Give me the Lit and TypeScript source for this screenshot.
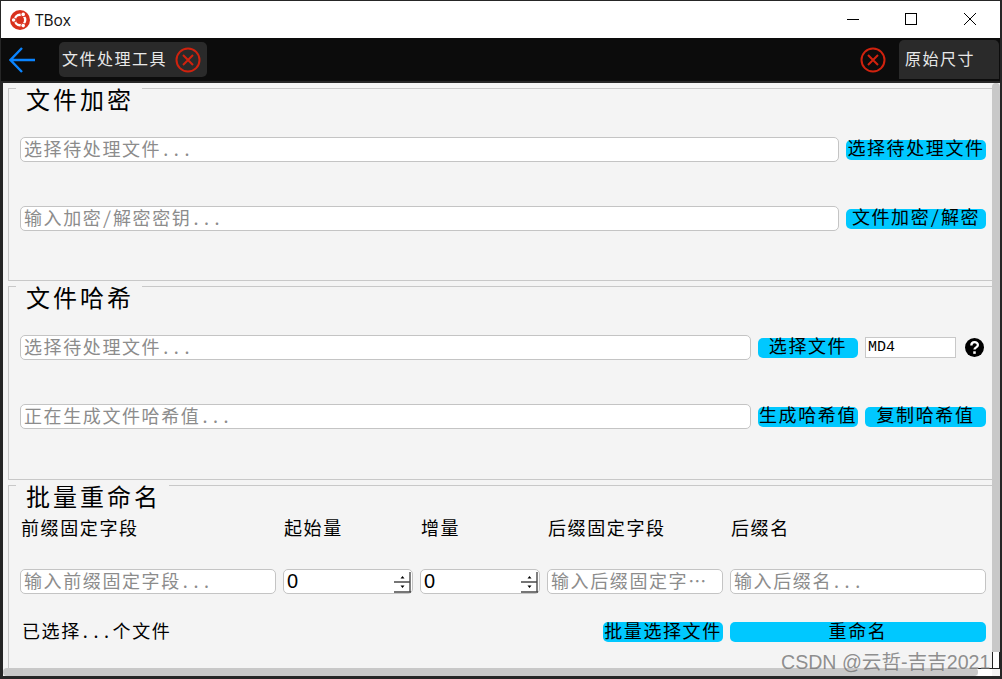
import { LitElement, html, css } from "lit";
import { customElement } from "lit/decorators.js";

const closeIcon = html`<svg class="x" width="26" height="26" viewBox="0 0 26 26" fill="none" stroke="#d0220e" stroke-width="2"><circle cx="13" cy="13" r="11.5"/><path d="M8 8l10 10M18 8L8 18"/></svg>`;

@customElement("app-root")
export class AppRoot extends LitElement {
  static styles = css`
    :host { display: block; width: 1002px; height: 679px; overflow: hidden; font-family: "Noto Sans CJK SC", "Liberation Serif", serif; font-feature-settings: "hwid"; color: #000; }
    * { box-sizing: border-box; }
    .win { width: 1002px; height: 679px; display: flex; flex-direction: column; background: #262626; padding: 1px 2px 3px 1px; position: relative; }
    .title { height: 37px; background: #fff; display: flex; align-items: center; flex: none; padding-left: 9px; }
    .title .name { font: 15.500px "Open Sans", sans-serif; margin-left: 5px; color: #111; }
    .ctl { margin-left: auto; display: flex; }
    .ctl svg { display: block; width: 59px; height: 37px; }
    .bar { height: 43px; background: #0c0c0c; display: flex; align-items: center; flex: none; color: #e8e8e8; }
    .back { margin-left: 8px; }
    .tab { margin-left: 24px; width: 148px; height: 35px; border-radius: 5px; background: #2a2a2a; display: flex; align-items: center; padding-left: 3px; font-size: 16px; letter-spacing: 1.500px; }
    .tab span { padding-bottom: 4px; }
    .tab svg { margin-left: 8px; }
    .bar .x2 { margin-left: auto; margin-right: 13px; display: block; }
    .orig { width: 100px; height: 39px; border-radius: 5px 5px 0 0; background: #2a2a2a; font-size: 16px; letter-spacing: 1.500px; display: flex; align-items: center; padding: 0 0 4px 6px; margin-right: 1px; }
    .mid { flex: 1; display: flex; min-height: 0; background: #f4f4f4; margin: 2px 0 0 2px; }
    .col { flex: 1; display: flex; flex-direction: column; min-width: 0; }
    .scroll { flex: 1; padding: 5px 0 0 5px; display: flex; flex-direction: column; gap: 5px; min-height: 0; overflow: hidden; }
    .side { width: 8px; flex: none; display: flex; flex-direction: column; }
    .vbar { flex: 1; background: #c8c8c8; border-radius: 4px 4px 0 0; }
    .vtrack { height: 16px; flex: none; background: #fff; border-left: 1px solid #222; border-right: 1px solid #222; }
    .corner { height: 8px; flex: none; background: #f4f4f4; border-top: 1px solid #222; }
    .hrow { height: 8px; flex: none; display: flex; }
    .hbar { flex: 1; background: #c8c8c8; border-radius: 4px; }
    .htrack { width: 14px; flex: none; background: #fff; border-top: 1px solid #222; }
    .group { border: 1px solid #c8c8c8; border-top: none; border-right: none; padding: 0 6px 0 11px; display: flex; flex-direction: column; height: 193px; flex: none; }
    .group.two { height: 194px; }
    .group.last { flex: 1; height: auto; border-bottom: none; }
    .head { display: flex; height: 26px; margin: 0 -6px 0 -11px; flex: none; }
    .head i { height: 1px; background: #c8c8c8; flex: none; width: 7px; }
    .head i.rest { flex: 1; }
    .head b { font-weight: 400; font-size: 24px; line-height: 28px; letter-spacing: 3px; padding: 0 8px 0 10px; height: 28px; margin-top: -3px; }
    .row { display: flex; align-items: center; gap: 7px; height: 25px; flex: none; }
    .row.first { margin-top: 23px; }
    .row.second { margin-top: 44px; }
    input { font: inherit; font-feature-settings: "hwid"; font-size: 18px; letter-spacing: 1.600px; height: 25px; border: 1px solid #c4c4c4; border-radius: 5px; background: #fff; padding: 0 3px 3px; min-width: 0; outline: none; text-overflow: ellipsis; color: #000; }
    input::placeholder { color: #8c8c8c; opacity: 1; }
    .grow { flex: 1; }
    button { font: inherit; font-feature-settings: "hwid"; font-size: 18px; letter-spacing: 1.600px; height: 20px; line-height: 14px; padding: 0 0 5px; border: none; border-radius: 5px; background: #00c8ff; color: #000; white-space: nowrap; flex: none; text-align: center; }
    .w140 { width: 140px; }
    .w100 { width: 100px; }
    .w121 { width: 121px; }
    .combo { width: 91px; height: 21px; border: 1px solid #c8c8c8; background: #fff; font: 15px "Liberation Mono", monospace; color: #000; padding-left: 2px; line-height: 19px; flex: none; }
    .help { width: 19px; height: 19px; margin-left: 2px; margin-right: 2px; flex: none; display: block; }
    .grid { display: grid; grid-template-columns: 256px 130px 120px 176px 256px; column-gap: 7px; }
    .labels { margin-top: 6px; font-size: 18px; letter-spacing: 1.600px; height: 24px; line-height: 20px; }
    .labels span { padding-left: 1px; white-space: nowrap; }
    .fields { margin-top: 28px; }
    .fields input { width: 100%; }
    .spin { display: flex; height: 25px; border: 1px solid #c4c4c4; border-radius: 5px; background: #fff; align-items: center; padding-right: 1px; font: 20px "Liberation Sans", sans-serif; }
    .spin span { flex: 1; padding: 0 0 1px 3px; }
    .arrows { width: 17px; height: 22px; display: block; flex: none; }
    .foot { margin-top: 27px; align-items: center; height: 22px; }
    .foot .count { font-size: 18px; letter-spacing: 1.600px; padding-left: 2px; height: 22px; line-height: 18px; grid-column: 1 / 3; }
    .foot .btns { grid-column: 4; height: 20px; display: flex; justify-content: flex-end; }
    .foot button { width: 100%; }
    .foot .btns button { width: 120px; }
    .wm { position: absolute; left: 781px; top: 646px; font: 19.600px "Liberation Sans", "Noto Sans CJK SC", sans-serif; color: rgba(115,115,115,.8); white-space: nowrap; }
  `;
  render() {
    return html`<div class="win">
      <div class="title">
        <svg width="20" height="20" viewBox="0 0 20 20"><circle cx="10" cy="10" r="10" fill="#d9301c"/><circle cx="10" cy="10" r="5.200" fill="none" stroke="#fff" stroke-width="2.400"/><circle cx="3.600" cy="10" r="2.600" fill="#d9301c"/><circle cx="13.200" cy="4.400" r="2.600" fill="#d9301c"/><circle cx="13.200" cy="15.600" r="2.600" fill="#d9301c"/><circle cx="3.600" cy="10" r="1.800" fill="#fff"/><circle cx="13.200" cy="4.400" r="1.800" fill="#fff"/><circle cx="13.200" cy="15.600" r="1.800" fill="#fff"/></svg>
        <span class="name">TBox</span>
        <div class="ctl">
          <svg viewBox="0 0 59 37"><path d="M24 18.500h12" stroke="#000"/></svg>
          <svg viewBox="0 0 59 37"><rect x="23.500" y="12.500" width="11" height="11" fill="none" stroke="#000"/></svg>
          <svg viewBox="0 0 59 37"><path d="M23 12l12 12M35 12L23 24" stroke="#000" fill="none"/></svg>
        </div>
      </div>
      <div class="bar">
        <svg class="back" width="26" height="26" viewBox="0 0 26 26" fill="none" stroke="#0a84ff" stroke-width="2.400"><path d="M26 13H2M13 1L1.500 13 13 25"/></svg>
        <div class="tab"><span>文件处理工具</span>${closeIcon}</div>
        <svg class="x2" width="26" height="26" viewBox="0 0 26 26" fill="none" stroke="#d0220e" stroke-width="2"><circle cx="13" cy="13" r="11.500"/><path d="M8 8l10 10M18 8L8 18"/></svg>
        <div class="orig">原始尺寸</div>
      </div>
      <div class="mid">
        <div class="col">
          <div class="scroll">
            <div class="group">
              <div class="head"><i></i><b>文件加密</b><i class="rest"></i></div>
              <div class="row first"><input class="grow" placeholder="选择待处理文件..."><button class="w140">选择待处理文件</button></div>
              <div class="row second"><input class="grow" placeholder="输入加密/解密密钥..."><button class="w140">文件加密/解密</button></div>
            </div>
            <div class="group two">
              <div class="head"><i></i><b>文件哈希</b><i class="rest"></i></div>
              <div class="row first"><input class="grow" placeholder="选择待处理文件..."><button class="w100">选择文件</button><div class="combo">MD4</div>
                <svg class="help" viewBox="0 0 18 18"><circle cx="9" cy="9" r="9" fill="#000"/><path d="M6 7c0-4 6.200-4 6.200-.4 0 2.300-3.200 2.200-3.200 4.400" fill="none" stroke="#fff" stroke-width="2.200"/><rect x="7.800" y="12.600" width="2.400" height="2.400" fill="#fff"/></svg></div>
              <div class="row second"><input class="grow" placeholder="正在生成文件哈希值..."><button class="w100">生成哈希值</button><button class="w121">复制哈希值</button></div>
            </div>
            <div class="group last">
              <div class="head"><i></i><b>批量重命名</b><i class="rest"></i></div>
              <div class="grid labels"><span>前缀固定字段</span><span>起始量</span><span>增量</span><span>后缀固定字段</span><span>后缀名</span></div>
              <div class="grid fields">
                <input placeholder="输入前缀固定字段...">
                <div class="spin"><span>0</span>${this.arrows()}</div>
                <div class="spin"><span>0</span>${this.arrows()}</div>
                <input placeholder="输入后缀固定字段...">
                <input placeholder="输入后缀名...">
              </div>
              <div class="grid foot"><div class="count">已选择...个文件</div><div class="btns"><button>批量选择文件</button></div><button style="grid-column:5">重命名</button></div>
            </div>
          </div>
          <div class="hrow"><div class="hbar"></div><div class="htrack"></div></div>
        </div>
        <div class="side"><div class="vbar"></div><div class="vtrack"></div><div class="corner"></div></div>
      </div>
      <div class="wm">CSDN @云哲-吉吉2021</div>
    </div>`;
  }
  arrows() {
    return html`<svg class="arrows" viewBox="0 0 17 22"><path d="M0 11H16M16 1V21M0 21H17" stroke="#4a4a4a" stroke-width="1.400" fill="none"/><path d="M8.500 5l2 2.500h-4zM8.500 17l2-2.500h-4z" fill="#000"/></svg>`;
  }
}
